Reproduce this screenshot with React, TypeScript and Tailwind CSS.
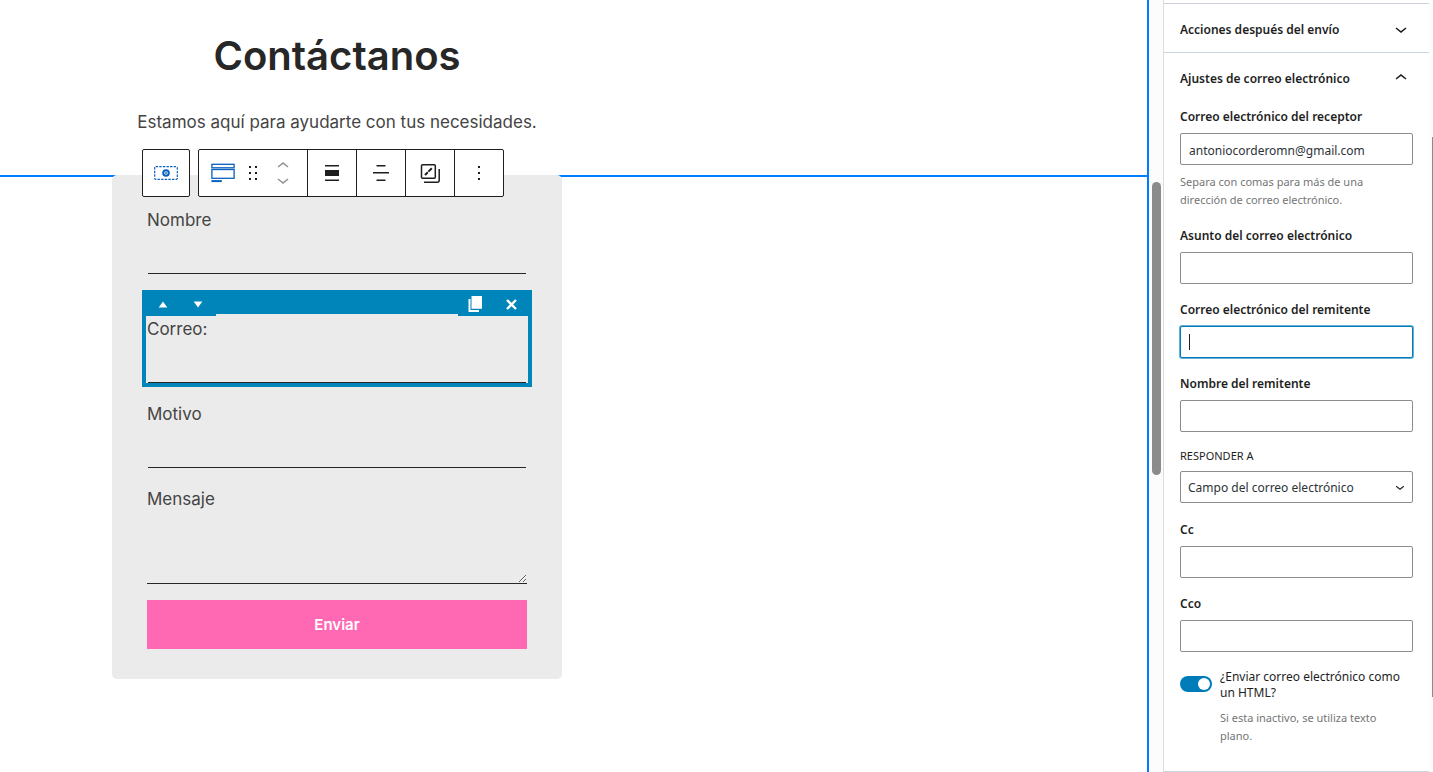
import React, { useState } from "react";

const WP = ({ d, className = "" }: { d: string; className?: string }) => (
  <svg viewBox="0 0 24 24" width="24" height="24" fill="currentColor" aria-hidden="true" className={className}>
    <path d={d} />
  </svg>
);

const CHEVRON_DOWN = "M17.5 11.6L12 16l-5.5-4.4.9-1.2L12 14l4.5-3.6 1 1.2z";
const CHEVRON_UP = "M6.5 12.4L12 8l5.5 4.4-.9 1.2L12 10l-4.5 3.6-1-1.2z";
const DRAG = "M8 7h2V5H8v2zm0 6h2v-2H8v2zm0 6h2v-2H8v2zm6-14v2h2V5h-2zm0 8h2v-2h-2v2zm0 6h2v-2h-2v2z";
const ALIGN_NONE = "M19 5.5H5V4h14v1.5ZM19 20H5v-1.5h14V20ZM5 9h14v6H5V9Z";
const JUSTIFY = "M7.5 5.5h9V4h-9v1.5Zm-3.5 7h16V11H4v1.5Zm3.5 7.5h9v-1.5h-9V20Z";
const MORE = "M13 19h-2v-2h2v2zm0-6h-2v-2h2v2zm0-6h-2V5h2v2z";

function Toolbar() {
  const cell = "flex w-[49px] items-center justify-center border-l border-[#1e1e1e]";
  return (
    <div role="toolbar" aria-label="Herramientas del bloque" className="absolute -top-[26px] left-[30px] flex h-12 gap-2 text-[#1e1e1e]">
      <button aria-label="Seleccionar sección" className="flex w-12 items-center justify-center rounded-xs border border-[#1e1e1e] bg-white text-[#0a60bd]">
        <svg viewBox="0 0 24 24" width="24" height="24" fill="none" stroke="currentColor" aria-hidden="true">
          <rect x="0.7" y="5.7" width="22.6" height="12.6" rx="1" strokeWidth="1.2" strokeDasharray="2.4 1.2" />
          <circle cx="12" cy="12" r="2.8" strokeWidth="2" />
          <path d="M12 10.8v2.4M10.8 12h2.4" strokeWidth="0.8" />
        </svg>
      </button>
      <div className="flex rounded-xs border border-[#1e1e1e] bg-white">
        <div className="flex w-[108px] items-center pl-3">
          <button aria-label="Formulario" className="text-[#0a60bd]">
            <svg viewBox="0 0 24 24" width="24" height="24" fill="none" stroke="currentColor" aria-hidden="true">
              <rect x="0.9" y="3.3" width="22.2" height="3.5" strokeWidth="1.3" />
              <rect x="0.9" y="8.5" width="22.2" height="8.8" strokeWidth="1.3" />
              <path d="M0.4 20.1h10.4" strokeWidth="2" />
            </svg>
          </button>
          <button aria-label="Arrastrar" className="ml-1.5"><WP d={DRAG} /></button>
          <div className="ml-1.5 flex flex-col text-[#949494]">
            <button aria-label="Mover hacia arriba" className="h-4 overflow-hidden"><WP d={CHEVRON_UP} className="-mt-[3px]" /></button>
            <button aria-label="Mover hacia abajo" className="h-4 overflow-hidden"><WP d={CHEVRON_DOWN} className="-mt-[5px]" /></button>
          </div>
        </div>
        <button aria-label="Alineación" className={cell}><WP d={ALIGN_NONE} /></button>
        <button aria-label="Justificación" className={cell}><WP d={JUSTIFY} /></button>
        <button aria-label="Copiar estilos" className={cell}>
          <svg viewBox="0 0 24 24" width="24" height="24" fill="none" stroke="currentColor" aria-hidden="true">
            <rect x="3.5" y="3.7" width="13.8" height="13.6" rx="1" strokeWidth="1.5" />
            <path d="M21.2 8v11.2a2 2 0 0 1-2 2H6" strokeWidth="1.5" />
            <path d="M7 14l2.8-2.8M10.4 10.6l3.4-3.4" strokeWidth="2" />
          </svg>
        </button>
        <button aria-label="Opciones" className={cell}><WP d={MORE} /></button>
      </div>
    </div>
  );
}

const lineInput = "block h-[41px] w-full border-b border-[#272727] bg-transparent px-2 text-base outline-none";

function LineField({ id, label, className = "" }: { id: string; label: string; className?: string }) {
  return (
    <div className={className}>
      <label htmlFor={id} className="block leading-[26px]">{label}</label>
      <div className="px-px">
        <input id={id} type="text" className={lineInput} />
      </div>
    </div>
  );
}

function SelectedField() {
  return (
    <div className="-mx-[5px] mt-4 border-x-4 border-b-4 border-[#0085ba]">
      <div className="-mx-1 flex h-[26px] items-start text-white">
        <div className="flex h-[26px] w-[74px] bg-[#0085ba] pl-[3px]">
          <button aria-label="Subir campo" className="flex w-9 items-center justify-center pt-0.5">
            <svg width="10" height="7" viewBox="0 0 10 7" fill="currentColor"><path d="M5 0.5L9.3 6.5H0.7z" /></svg>
          </button>
          <button aria-label="Bajar campo" className="flex w-9 items-center justify-center pt-[3px]">
            <svg width="10" height="7" viewBox="0 0 10 7" fill="currentColor"><path d="M5 6.5L9.3 0.5H0.7z" /></svg>
          </button>
        </div>
        <div className="h-6 flex-1 bg-[#0085ba]" />
        <div className="flex h-[26px] w-[74px] bg-[#0085ba] pr-0.5">
          <button aria-label="Duplicar campo" className="flex w-[34px] items-center justify-center pt-0.5">
            <svg width="14" height="16" viewBox="0 0 14 16" fill="currentColor"><path d="M3.5 0H14v12.8H3.5zM0.5 3h2v11h8.5V16H0.5z" /></svg>
          </button>
          <button aria-label="Eliminar campo" className="flex w-[38px] items-center justify-center pt-0.5">
            <svg width="11" height="11" viewBox="0 0 11 11" fill="none" stroke="currentColor" strokeWidth="2.4"><path d="M1 1l9 9M10 1l-9 9" /></svg>
          </button>
        </div>
      </div>
      <LineField id="correo" label="Correo:" className="px-px" />
    </div>
  );
}

function Canvas() {
  return (
    <main className="min-w-0 flex-1 border-r-2 border-[#007cff] bg-white font-['Inter',sans-serif] text-[#444]">
      <section className="h-[175px] pl-28">
        <div className="w-[450px] pt-8 text-center">
          <h1 className="text-[40px] leading-[48px] font-semibold text-[#272727]">Contáctanos</h1>
          <p className="mt-7 text-[17px] leading-7">Estamos aquí para ayudarte con tus necesidades.</p>
        </div>
      </section>
      <section className="border-t-2 border-[#007cff] pl-28">
        <div className="relative -mt-0.5 w-[450px] rounded-[5px] bg-[#ebebeb] px-[35px] pt-8 pb-[30px] text-[17px]">
          <Toolbar />
          <form onSubmit={(e) => e.preventDefault()}>
            <LineField id="nombre" label="Nombre" />
            <SelectedField />
            <LineField id="motivo" label="Motivo" className="mt-3.5" />
            <label htmlFor="mensaje" className="mt-[18px] block leading-[26px]">Mensaje</label>
            <textarea id="mensaje" className="block h-[72px] w-full resize-y border-b border-[#272727] bg-transparent p-2 text-base outline-none" />
            <button type="submit" className="mt-4 block h-[49px] w-full bg-[#ff69b4] pt-0.5 text-[15px] font-semibold text-white">Enviar</button>
          </form>
        </div>
      </section>
    </main>
  );
}

const boxBase = "block h-8 w-full rounded-xs border bg-white px-2 pt-0.5 text-xs text-[#2c3338] outline-none";
const box = boxBase + " border-[#8c8c8c]";
const focusBox = boxBase + " border-[#007cba] ring-1 ring-[#007cba]/60";
const labelText = "block text-xs leading-[22px] font-semibold text-[#1e1e1e]";
const helpText = "mt-2 pr-7 text-[11px] leading-[18px] text-[#757575]";

function TextField({ id, label, value = "", focused = false }: { id: string; label: string; value?: string; focused?: boolean }) {
  return (
    <div>
      <label htmlFor={id} className={labelText}>{label}</label>
      <div className="relative mt-[5px]">
        <input id={id} type="text" defaultValue={value} className={focused ? focusBox : box} />
        {focused && <span className="absolute top-2 left-[9px] h-4 w-px bg-[#1e1e1e]" />}
      </div>
    </div>
  );
}

function Sidebar() {
  const [html, setHtml] = useState(true);
  return (
    <aside className="w-[266px] shrink-0 border-l border-[#ddd] bg-white pt-[3px] font-['Noto_Sans',sans-serif]">
      <h2 className="border-t border-[#ccd0d8]">
        <button aria-expanded="false" className="flex h-12 w-full items-center justify-between px-4 pt-px text-xs font-semibold text-[#1e1e1e]">
          <span className="pt-0.5">Acciones después del envío</span>
          <WP d={CHEVRON_DOWN} />
        </button>
      </h2>
      <section className="border-y border-[#ccd5e0]">
        <h2>
          <button aria-expanded="true" className="flex h-[49px] w-full items-center justify-between px-4 text-xs font-semibold text-[#1e1e1e]">
            <span className="pt-0.5">Ajustes de correo electrónico</span>
            <WP d={CHEVRON_UP} />
          </button>
        </h2>
        <div className="flex flex-col gap-[15px] px-4 pt-1 pb-[26px]">
          <div className="pb-px">
            <TextField id="receptor" label="Correo electrónico del receptor" value="antoniocorderomn@gmail.com" />
            <p className={helpText}>Separa con comas para más de una dirección de correo electrónico.</p>
          </div>
          <TextField id="asunto" label="Asunto del correo electrónico" />
          <TextField id="remitente" label="Correo electrónico del remitente" focused />
          <TextField id="nombre-remitente" label="Nombre del remitente" />
          <div className="pb-px">
            <label htmlFor="responder" className="block text-[11px] leading-[18px] text-[#1e1e1e] uppercase">Responder a</label>
            <div className="relative mt-1.5">
              <select id="responder" className={box + " appearance-none pl-[7px]"}>
                <option>Campo del correo electrónico</option>
              </select>
              <svg viewBox="0 0 24 24" width="18" height="18" fill="currentColor" aria-hidden="true" className="pointer-events-none absolute top-[7px] right-1 text-[#1e1e1e]">
                <path d={CHEVRON_DOWN} />
              </svg>
            </div>
          </div>
          <TextField id="cc" label="Cc" />
          <TextField id="cco" label="Cco" />
          <div className="flex gap-2 pt-px">
            <input
              id="html"
              type="checkbox"
              role="switch"
              checked={html}
              onChange={(e) => setHtml(e.target.checked)}
              className="mt-2 h-4 w-8 shrink-0 appearance-none rounded-full bg-[#949494] before:mt-0.5 before:ml-0.5 before:block before:size-3 before:rounded-full before:bg-white checked:bg-[#007cba] checked:before:ml-[18px]"
            />
            <div>
              <label htmlFor="html" className="block pt-px text-xs leading-4 text-[#1e1e1e]">¿Enviar correo electrónico como un HTML?</label>
              <p className={helpText}>Si esta inactivo, se utiliza texto plano.</p>
            </div>
          </div>
        </div>
      </section>
    </aside>
  );
}

export default function App() {
  return (
    <div className="flex min-h-screen bg-[#fcfcfc]">
      <Canvas />
      <div className="w-3.5 shrink-0 px-[3px] pt-[182px]">
        <div className="h-[293px] w-[9px] rounded-full bg-[#8b8b8b]" />
      </div>
      <Sidebar />
      <div className="flex w-1 shrink-0 justify-end pt-[137px]">
        <div className="h-[560px] w-px bg-[#8b8b8b]" />
      </div>
    </div>
  );
}
